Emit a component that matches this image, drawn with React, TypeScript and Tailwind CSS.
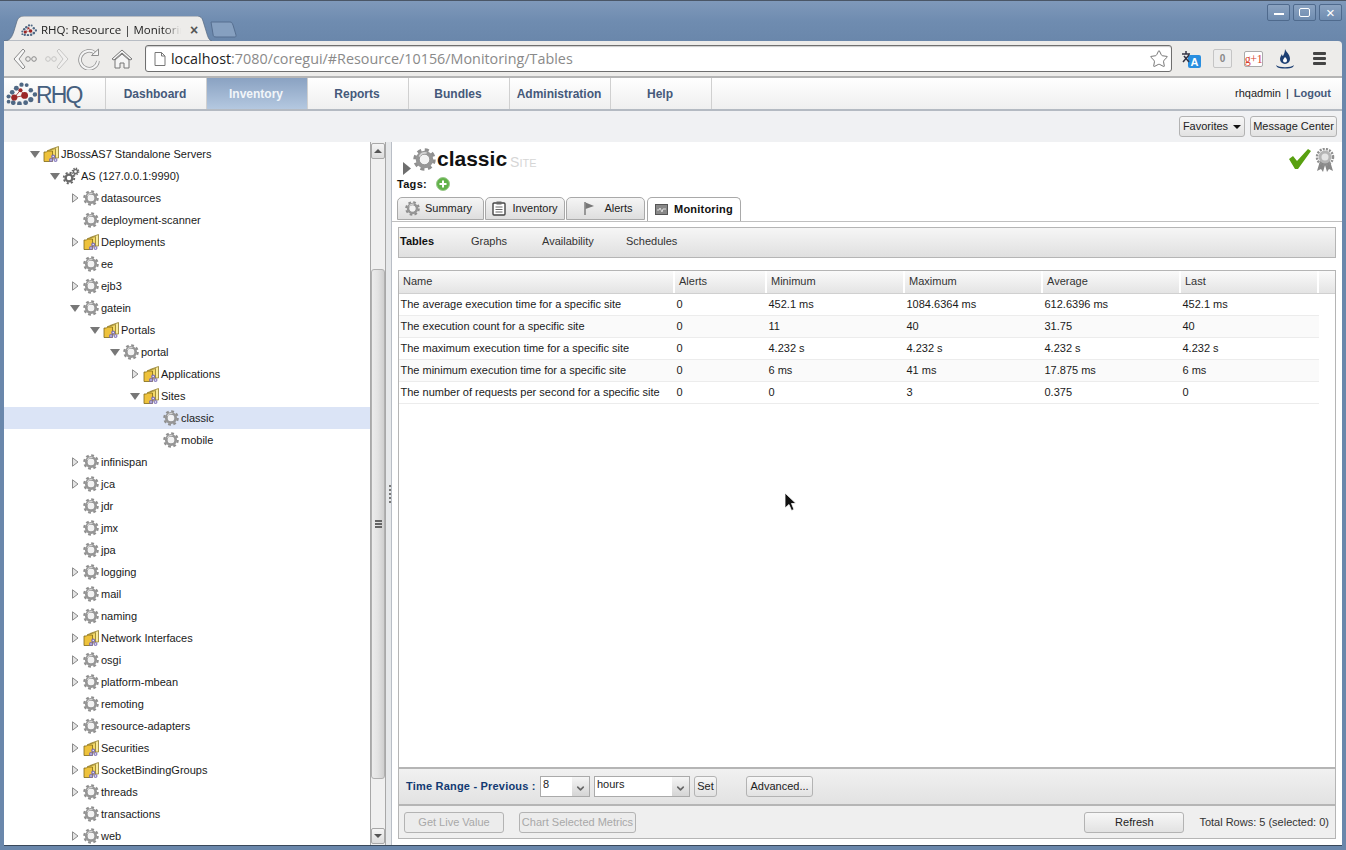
import { ChevronDown, Star } from 'lucide-react';

type Arrow = 'open' | 'closed' | 'none';
type IconKind = 'gear' | 'folder' | 'gears';

interface TreeRow {
  level: number;
  arrow: Arrow;
  icon: IconKind;
  label: string;
  selected?: boolean;
}

const treeRows: TreeRow[] = [
  { level: 0, arrow: 'open', icon: 'folder', label: 'JBossAS7 Standalone Servers' },
  { level: 1, arrow: 'open', icon: 'gears', label: 'AS (127.0.0.1:9990)' },
  { level: 2, arrow: 'closed', icon: 'gear', label: 'datasources' },
  { level: 2, arrow: 'none', icon: 'gear', label: 'deployment-scanner' },
  { level: 2, arrow: 'closed', icon: 'folder', label: 'Deployments' },
  { level: 2, arrow: 'none', icon: 'gear', label: 'ee' },
  { level: 2, arrow: 'closed', icon: 'gear', label: 'ejb3' },
  { level: 2, arrow: 'open', icon: 'gear', label: 'gatein' },
  { level: 3, arrow: 'open', icon: 'folder', label: 'Portals' },
  { level: 4, arrow: 'open', icon: 'gear', label: 'portal' },
  { level: 5, arrow: 'closed', icon: 'folder', label: 'Applications' },
  { level: 5, arrow: 'open', icon: 'folder', label: 'Sites' },
  { level: 6, arrow: 'none', icon: 'gear', label: 'classic', selected: true },
  { level: 6, arrow: 'none', icon: 'gear', label: 'mobile' },
  { level: 2, arrow: 'closed', icon: 'gear', label: 'infinispan' },
  { level: 2, arrow: 'closed', icon: 'gear', label: 'jca' },
  { level: 2, arrow: 'none', icon: 'gear', label: 'jdr' },
  { level: 2, arrow: 'none', icon: 'gear', label: 'jmx' },
  { level: 2, arrow: 'none', icon: 'gear', label: 'jpa' },
  { level: 2, arrow: 'closed', icon: 'gear', label: 'logging' },
  { level: 2, arrow: 'closed', icon: 'gear', label: 'mail' },
  { level: 2, arrow: 'closed', icon: 'gear', label: 'naming' },
  { level: 2, arrow: 'closed', icon: 'folder', label: 'Network Interfaces' },
  { level: 2, arrow: 'closed', icon: 'gear', label: 'osgi' },
  { level: 2, arrow: 'closed', icon: 'gear', label: 'platform-mbean' },
  { level: 2, arrow: 'none', icon: 'gear', label: 'remoting' },
  { level: 2, arrow: 'closed', icon: 'gear', label: 'resource-adapters' },
  { level: 2, arrow: 'closed', icon: 'folder', label: 'Securities' },
  { level: 2, arrow: 'closed', icon: 'folder', label: 'SocketBindingGroups' },
  { level: 2, arrow: 'closed', icon: 'gear', label: 'threads' },
  { level: 2, arrow: 'none', icon: 'gear', label: 'transactions' },
  { level: 2, arrow: 'closed', icon: 'gear', label: 'web' },
];

const navItems = ['Dashboard', 'Inventory', 'Reports', 'Bundles', 'Administration', 'Help'];

const metricRows = [
  ['The average execution time for a specific site', '0', '452.1 ms', '1084.6364 ms', '612.6396 ms', '452.1 ms'],
  ['The execution count for a specific site', '0', '11', '40', '31.75', '40'],
  ['The maximum execution time for a specific site', '0', '4.232 s', '4.232 s', '4.232 s', '4.232 s'],
  ['The minimum execution time for a specific site', '0', '6 ms', '41 ms', '17.875 ms', '6 ms'],
  ['The number of requests per second for a specific site', '0', '0', '3', '0.375', '0'],
];

const columns = ['Name', 'Alerts', 'Minimum', 'Maximum', 'Average', 'Last'];

function Gear({ size = 16 }: { size?: number }) {
  return (
    <svg width={size} height={size} viewBox="0 0 16 16" className="shrink-0">
      <circle cx="8" cy="8" r="6.700" fill="none" stroke="#8f8f8f" strokeWidth="2.200" strokeDasharray="2.800 2.460" />
      <circle cx="8" cy="8" r="4.700" fill="none" stroke="#969696" strokeWidth="2.800" />
      <path d="M4.400 6A4.600 4.600 0 0 1 9.500 3.500" fill="none" stroke="#d4d4d4" strokeWidth="1.200" />
      <circle cx="8" cy="8" r="3.100" fill="#f2f2f2" />
    </svg>
  );
}

function Gears() {
  return (
    <svg width="18" height="18" viewBox="0 0 18 18" className="shrink-0">
      <circle cx="7" cy="11" r="5.300" fill="none" stroke="#666" strokeWidth="1.800" strokeDasharray="2.100 2.060" />
      <circle cx="7" cy="11" r="3.400" fill="none" stroke="#6a6a6a" strokeWidth="2.400" />
      <circle cx="13.500" cy="4.500" r="3.200" fill="none" stroke="#666" strokeWidth="1.400" strokeDasharray="1.300 1.210" />
      <circle cx="13.500" cy="4.500" r="2" fill="none" stroke="#6a6a6a" strokeWidth="1.400" />
    </svg>
  );
}

function Folder() {
  return (
    <svg width="17" height="17" viewBox="0 0 17 17" className="shrink-0">
      <path d="M7 3.500 15.500 .5V12H7Z" fill="#f8ea9a" stroke="#8f7a28" strokeWidth="0.8" />
      <path d="M4.500 4.500 12.500 2.500V13H4.500Z" fill="#f3d968" stroke="#8f7a28" strokeWidth="0.8" />
      <path d="M1 6H3.500L4.500 5H9.500V15.500H1Z" fill="#eec23c" stroke="#7f6818" strokeWidth="0.8" />
      <circle cx="8" cy="14" r="2" fill="#7d70b4" />
      <circle cx="12.500" cy="14" r="2" fill="#8f84c2" />
      <circle cx="10.200" cy="10.500" r="2" fill="#7d70b4" />
      <circle cx="8" cy="14" r="0.700" fill="#fff" />
      <circle cx="12.500" cy="14" r="0.700" fill="#fff" />
      <circle cx="10.200" cy="10.500" r="0.700" fill="#fff" />
    </svg>
  );
}

function TreeArrow({ arrow }: { arrow: Arrow }) {
  if (arrow === 'open') {
    return (
      <svg width="10" height="7" viewBox="0 0 10 7" className="shrink-0">
        <path d="M0 0H10L5 7Z" fill="#777" />
      </svg>
    );
  }
  if (arrow === 'closed') {
    return (
      <svg width="10" height="10" viewBox="0 0 10 10" className="shrink-0">
        <path d="M2.500 .8 8 5 2.500 9.200Z" fill="#e4e4e4" stroke="#8a8a8a" />
      </svg>
    );
  }
  return <span className="w-[10px] shrink-0" />;
}

function TreeItem({ row }: { row: TreeRow }) {
  return (
    <div
      className={`flex h-[22px] shrink-0 items-center text-[11px] text-[#1a1a1a] ${row.selected ? 'bg-[#dbe4f6]' : ''}`}
      style={{ paddingLeft: 26 + row.level * 20 }}
    >
      <span className="flex w-[10px] justify-center">
        <TreeArrow arrow={row.arrow} />
      </span>
      <span className="ml-[3px] flex w-[16px] justify-center">
        {row.icon === 'gear' && <Gear />}
        {row.icon === 'folder' && <Folder />}
        {row.icon === 'gears' && <Gears />}
      </span>
      <span className="ml-[2px] whitespace-nowrap">{row.label}</span>
    </div>
  );
}

function WinButton({ children }: { children: React.ReactNode }) {
  return (
    <div className="flex h-[17px] w-[23px] items-center justify-center rounded-[2px] border border-[#4f6a8d] bg-gradient-to-b from-[#8ba3c1] to-[#6f8cb0]">
      {children}
    </div>
  );
}

function TitleBar() {
  return (
    <div className="relative flex h-[41px] shrink-0 items-start justify-end border-t border-[#4a5666] bg-gradient-to-b from-[#7f99ba] via-[#6f8cb0] to-[#6a87ab] pr-[4px] pt-[3px]">
      <div className="absolute bottom-0 left-[4px] h-[25px] w-[208px]">
        <svg width="208" height="25" viewBox="0 0 208 25" className="absolute inset-0">
          <path d="M0 25C6 25 8 21 10 15L13 5C14 2 16 0 20 0H192C197 0 198 2 199 5L203 18C204 22 206 25 208 25Z" fill="#edecea" stroke="#56697f" strokeWidth="0.7" />
        </svg>
        <div className="relative flex h-full items-center pl-[17px] pt-[3px]">
          <Logo size={16} />
          <span className="ml-[4px] w-[140px] overflow-hidden whitespace-nowrap font-['Open_Sans',sans-serif] text-[11.500px] text-[#222] [mask-image:linear-gradient(to_right,#000_88%,transparent)]">
            RHQ: Resource | Monitoring
          </span>
          <span className="ml-[9px] text-[14px] leading-none font-bold text-[#555]">×</span>
        </div>
      </div>
      <svg width="28" height="17" viewBox="0 0 28 17" className="absolute bottom-[3px] left-[210px]">
        <path d="M1 1H20C22 1 22 2 23 4L26 14C26 15 26 16 25 16H6C4 16 3 15 3 13Z" fill="#86a0c0" stroke="#566f90" />
      </svg>
      <div className="flex gap-[3px]">
        <WinButton><span className="mt-[2px] block h-[2px] w-[10px] bg-white" /></WinButton>
        <WinButton><span className="block h-[9px] w-[11px] rounded-[2px] border-[1.5px] border-white" /></WinButton>
        <WinButton><span className="text-[15px] leading-none text-white">×</span></WinButton>
      </div>
    </div>
  );
}

function Logo({ size = 30 }: { size?: number }) {
  const dots: [number, number, number, string][] = [
    [2.500, 14, 2, '#4f6884'], [6, 10, 2.300, '#4f6884'], [10, 6, 2.400, '#4f6884'], [15, 2.600, 2.100, '#4f6884'],
    [20, 3, 1.900, '#4f6884'], [24, 8, 2.200, '#4f6884'], [28, 12, 2.200, '#4f6884'], [24, 17, 2.500, '#4f6884'],
    [19, 20, 2.300, '#4f6884'], [13, 21, 2.300, '#4f6884'], [7, 20, 2.300, '#4f6884'], [2.500, 19, 1.800, '#4f6884'],
    [8, 15, 3, '#9c2727'], [18, 13, 3.300, '#9c2727'], [14, 8, 2, '#9c2727'],
  ];
  return (
    <svg width={size} height={(size * 23) / 30} viewBox="0 0 30 23" className="shrink-0">
      <path d="M8 15 18 13 14 8Z" fill="none" stroke="#9c2727" strokeWidth="0.8" />
      {dots.map(([cx, cy, r, fill], i) => (
        <circle key={i} cx={cx} cy={cy} r={r} fill={fill} />
      ))}
    </svg>
  );
}

function BrowserToolbar() {
  return (
    <div className="flex h-[37px] shrink-0 items-center rounded-tr-[4px] border-b-2 border-[#b5b5b5] bg-[#edecea]">
      <svg width="26" height="24" viewBox="0 0 26 24" className="ml-[8px]">
        <path d="M11 2 2 12l9 10 2-2-6-8 6-8Z" fill="#f7f7f7" stroke="#8a8a8a" />
        <circle cx="16" cy="12" r="2.300" fill="none" stroke="#8a8a8a" />
        <circle cx="22" cy="12" r="2.300" fill="none" stroke="#8a8a8a" />
      </svg>
      <svg width="26" height="24" viewBox="0 0 26 24" className="ml-[6px] opacity-40">
        <path d="M15 2 24 12l-9 10-2-2 6-8-6-8Z" fill="#f7f7f7" stroke="#8a8a8a" />
        <circle cx="10" cy="12" r="2.300" fill="none" stroke="#8a8a8a" />
        <circle cx="4" cy="12" r="2.300" fill="none" stroke="#8a8a8a" />
      </svg>
      <svg width="22" height="22" viewBox="0 0 22 22" className="ml-[8px]">
        <path d="M17 5A9 9 0 1 0 20 13" fill="none" stroke="#8f8f8f" strokeWidth="3.600" />
        <path d="M17 5A9 9 0 1 0 20 13" fill="none" stroke="#f5f5f5" strokeWidth="2" />
        <path d="M13.500 7.500H20.500V1Z" fill="#f5f5f5" stroke="#8f8f8f" />
      </svg>
      <svg width="22" height="22" viewBox="0 0 22 22" className="ml-[11px]">
        <path d="M1 11 11 2l10 9-2 1-8-7-8 7Z" fill="#f5f5f5" stroke="#777" />
        <path d="M4 12v8h5v-5h4v5h5v-8l-7-6Z" fill="#f5f5f5" stroke="#777" />
      </svg>
      <div className="ml-[12px] flex h-[27px] w-[1027px] items-center rounded-[3px] border border-[#6f6f6f] bg-white pl-[8px] pr-[2px] shadow-[inset_0_1px_1px_#ccc]">
        <svg width="12" height="14" viewBox="0 0 12 14" className="shrink-0">
          <path d="M1 .5H7.500L11 4V13.500H1Z M7.500 .5V4H11" fill="#fff" stroke="#777" />
        </svg>
        <span className="ml-[5px] font-['Open_Sans',sans-serif] text-[14.350px] whitespace-nowrap text-[#8a8a8a]">
          <span className="text-[#222]">localhost</span>:7080/coregui/#Resource/10156/Monitoring/Tables
        </span>
        <Star className="ml-auto h-[20px] w-[20px] text-[#777]" strokeWidth={1.200} />
      </div>
      <svg width="20" height="20" viewBox="0 0 20 20" className="ml-[9px]">
        <rect x="7" y="6" width="13" height="13" rx="2" fill="#2a8fe0" />
        <text x="9.500" y="17" fontSize="11" fontWeight="bold" fill="#fff" fontFamily="Liberation Sans">A</text>
        <path d="M1 5h8M5 2v3M2 13 8 6M3 7l5 6" stroke="#334" strokeWidth="1.500" fill="none" />
      </svg>
      <div className="ml-[12px] flex h-[19px] w-[19px] items-center justify-center rounded-[2px] border border-[#c5c5c5] bg-[#ededed] text-[10px] font-bold text-[#888]">0</div>
      <div className="ml-[12px] flex h-[16px] w-[19px] items-center justify-center rounded-[2px] border border-[#aaa] bg-white font-['Liberation_Serif',serif] text-[12px] leading-none tracking-[-0.5px] text-[#d8432f]">g+1</div>
      <svg width="20" height="22" viewBox="0 0 20 22" className="ml-[12px]">
        <path d="M10 1c1 3 5 5 5 10a5 5 0 0 1-10 0c0-2 1-3 2-5 0 2 1 2 1 2 1-2 2-4 2-7Z" fill="#1d3f73" />
        <path d="M10 9c1 1 2 2 2 3.500a2 2 0 0 1-4 0c0-1 1-2 2-3.500Z" fill="#fff" />
        <path d="M1 17c3 3 15 3 18 0l-1 2c-3 2-13 2-16 0Z" fill="#1d3f73" />
      </svg>
      <div className="ml-[18px] flex flex-col gap-[2px]">
        <span className="block h-[3px] w-[13px] rounded-[1px] bg-[#444]" />
        <span className="block h-[3px] w-[13px] rounded-[1px] bg-[#444]" />
        <span className="block h-[3px] w-[13px] rounded-[1px] bg-[#444]" />
      </div>
    </div>
  );
}

function AppNav() {
  return (
    <div className="flex h-[33px] shrink-0 border-b-2 border-[#b4bac2] bg-gradient-to-b from-white to-[#efefef]">
      <div className="flex w-[102px] items-center border-r border-[#d0d0d0] pl-[2px]">
        <Logo size={31} />
        <span className="ml-[-1px] mt-[3px] font-['Liberation_Sans',sans-serif] text-[23px] leading-none tracking-[-1.800px] text-[#46607f]">RHQ</span>
      </div>
      {navItems.map((item) => (
        <div
          key={item}
          className={`flex w-[101px] items-center justify-center border-r border-[#d0d0d0] pr-[2px] text-[12px] font-bold ${
            item === 'Inventory' ? 'bg-gradient-to-b from-[#8aa2c2] to-[#b4c8e0] text-[#f2f5f9]' : 'text-[#45597a]'
          }`}
        >
          {item}
        </div>
      ))}
      <div className="ml-auto flex items-center pr-[11px] text-[11px] text-[#222]">
        rhqadmin<span className="mx-[5px]">|</span><span className="font-bold text-[#45597a]">Logout</span>
      </div>
    </div>
  );
}

function Btn({ children, className = '', disabled = false }: { children: React.ReactNode; className?: string; disabled?: boolean }) {
  return (
    <div
      className={`flex h-[21px] items-center justify-center whitespace-nowrap rounded-[3px] border border-[#b3b3b3] text-[11px] ${
        disabled ? 'bg-[#ececec] text-[#a8a8a8]' : 'bg-gradient-to-b from-[#f7f7f7] to-[#e2e2e2] text-[#222]'
      } ${className}`}
    >
      {children}
    </div>
  );
}

function Scrollbar() {
  return (
    <div className="flex w-[16px] shrink-0 flex-col border-x border-[#a8a8a8] bg-[#f0f0f0] pt-[1px]">
      <div className="flex h-[16px] items-center justify-center rounded-[2px] border border-[#a8a8a8] bg-gradient-to-b from-[#f5f5f5] to-[#dcdcdc]">
        <span className="h-0 w-0 border-x-[4px] border-b-[4px] border-x-transparent border-b-[#555]" />
      </div>
      <div className="mt-[110px] flex h-[510px] items-center justify-center rounded-[3px] border border-[#b0b0b0] bg-gradient-to-r from-[#ececec] via-[#e2e2e2] to-[#cfcfcf]">
        <span className="flex flex-col gap-[1px]">
          <i className="block h-[2px] w-[7px] bg-[#666]" />
          <i className="block h-[2px] w-[7px] bg-[#666]" />
          <i className="block h-[2px] w-[7px] bg-[#666]" />
        </span>
      </div>
      <div className="mt-auto mb-[1px] flex h-[16px] items-center justify-center rounded-[2px] border border-[#a8a8a8] bg-gradient-to-b from-[#f5f5f5] to-[#dcdcdc]">
        <span className="h-0 w-0 border-x-[4px] border-t-[4px] border-x-transparent border-t-[#555]" />
      </div>
    </div>
  );
}

function Splitter() {
  return (
    <div className="flex w-[6px] shrink-0 flex-col items-center justify-center gap-[2px] border-r border-[#b9bec6] bg-[#e6e8ea] pl-[2px]">
      {[0, 1, 2, 3, 4].map((i) => (
        <i key={i} className="block h-[2px] w-[2px] bg-[#777]" />
      ))}
    </div>
  );
}

function TabButton({ label, active, icon, className = 'justify-center gap-[6px]' }: { label: string; active?: boolean; icon: React.ReactNode; className?: string }) {
  return (
    <div
      className={`flex items-center rounded-t-[5px] border border-[#a9a9a9] pb-[1px] text-[11px] ${
        active ? 'relative z-10 h-[24px] border-b-0 bg-white font-bold tracking-[0.2px] text-[#111]' : 'h-[23px] bg-gradient-to-b from-[#f5f5f5] to-[#dedede] text-[#222]'
      } ${className}`}
    >
      {icon}
      <span>{label}</span>
    </div>
  );
}

function MonitorTabs() {
  return (
    <div className="flex items-start gap-[1px] border-b border-[#bfbfbf] pl-[5px]">
      <div className="w-[87px]"><TabButton label="Summary" className="gap-[5px] pl-[7px]" icon={<Gear size={15} />} /></div>
      <div className="w-[80px]">
        <TabButton
          label="Inventory"
          icon={
            <svg width="14" height="15" viewBox="0 0 14 15">
              <rect x="1" y="2" width="12" height="12" rx="1" fill="#fff" stroke="#444" strokeWidth="1.400" />
              <rect x="4.500" y="0.500" width="5" height="3" fill="#666" />
              <path d="M3.500 6h7M3.500 8.500h7M3.500 11h7" stroke="#666" />
            </svg>
          }
        />
      </div>
      <div className="w-[79px]">
        <TabButton
          label="Alerts"
          icon={
            <svg width="14" height="14" viewBox="0 0 14 14" className="mr-[2px] ml-[4px]">
              <path d="M3 1V14" stroke="#777" strokeWidth="1.400" />
              <path d="M3.500 1.500 12 5 3.500 8Z" fill="#777" />
            </svg>
          }
        />
      </div>
      <div className="ml-[1px] w-[94px]">
        <TabButton
          active
          label="Monitoring"
          icon={
            <svg width="13" height="11" viewBox="0 0 13 11">
              <rect x=".5" y=".5" width="12" height="10" fill="#888" stroke="#555" />
              <path d="M2 6h2l1-2 2 4 1-3h3" stroke="#ddd" fill="none" />
            </svg>
          }
        />
      </div>
    </div>
  );
}

function MetricsTable() {
  return (
    <div className="flex min-h-0 flex-1 flex-col bg-white">
      <div className="grid h-[23px] shrink-0 grid-cols-[276px_92px_138px_138px_138px_138px_1fr] border-b border-[#d0d0d0] bg-gradient-to-b from-[#fafafa] to-[#e4e4e4] text-[11px] text-[#333]">
        {columns.map((c) => (
          <div key={c} className="flex items-center border-r-2 border-white pb-[2px] pl-[4px]">{c}</div>
        ))}
        <div />
      </div>
      {metricRows.map((row, i) => (
        <div
          key={row[0]}
          className={`grid h-[22px] w-[920px] shrink-0 grid-cols-[276px_92px_138px_138px_138px_138px] items-center border-b border-[#ececec] text-[11px] text-[#1a1a1a] ${
            i % 2 === 1 ? 'bg-[#fafafa]' : 'bg-white'
          }`}
        >
          {row.map((cell, j) => (
            <div key={j} className="pl-[1.500px] whitespace-nowrap">{cell}</div>
          ))}
        </div>
      ))}
    </div>
  );
}

function Select({ value, className }: { value: string; className: string }) {
  return (
    <div className={`flex h-[21px] border border-[#aaa] bg-white text-[11px] text-[#222] ${className}`}>
      <span className="flex-1 pl-[2px] leading-[15px]">{value}</span>
      <span className="flex w-[17px] items-end justify-center bg-gradient-to-b from-[#f5f5f5] to-[#d5d5d5] pb-[2px]">
        <ChevronDown className="h-[11px] w-[11px] text-[#666]" strokeWidth={3.500} />
      </span>
    </div>
  );
}

export default function App() {
  return (
    <div className="flex h-[850px] w-[1346px] flex-col overflow-hidden bg-[#6a87ab] font-['Liberation_Sans',Arial,sans-serif]">
      <TitleBar />
      <div className="mx-[4px] mb-[4px] flex min-h-0 flex-1 flex-col border-b border-[#39485a]">
        <BrowserToolbar />
        <AppNav />
        <div className="flex h-[31px] shrink-0 items-center justify-end gap-[5px] bg-[#f0f1f3] pr-[5px]">
          <Btn className="w-[66px] gap-[5px]">
            Favorites
            <span className="h-0 w-0 border-x-[4px] border-t-[4px] border-x-transparent border-t-[#111]" />
          </Btn>
          <Btn className="w-[87px]">Message Center</Btn>
        </div>
        <div className="flex min-h-0 flex-1 bg-white">
          {/* Inventory tree */}
          <div className="flex w-[382px] shrink-0">
            <div className="flex min-w-0 flex-1 flex-col overflow-hidden pt-px">
              {treeRows.map((row) => (
                <TreeItem key={row.label} row={row} />
              ))}
            </div>
            <Scrollbar />
          </div>
          <Splitter />
          {/* Resource detail */}
          <div className="flex min-w-0 flex-1 flex-col">
            <div className="flex h-[55px] shrink-0 flex-col pl-[5px] pr-[7px]">
              <div className="flex h-[34px] items-start pt-[6px]">
                <svg width="10" height="13" viewBox="0 0 10 13" className="mt-[14px] ml-[5px]">
                  <path d="M1 0 9 6.500 1 13Z" fill="#6e6e6e" />
                </svg>
                <span className="ml-[1px]"><Gear size={23} /></span>
                <span className="ml-px text-[21px] leading-[22px] font-bold text-[#111]">classic</span>
                <span className="mt-[6px] ml-[3px] text-[14px] leading-[16px] text-[#d6d6d6]">S<span className="text-[11px]">ITE</span></span>
                <svg width="24" height="22" viewBox="0 0 24 22" className="ml-auto">
                  <path d="M1 11 5 8l4 5L20 1l3 2L10 21H7Z" fill="#58a010" />
                </svg>
                <svg width="20" height="24" viewBox="0 0 20 24" className="ml-[3px]">
                  <path d="M5 13 2 23l4-2 2 3 2-7 2 7 2-3 4 2-3-10Z" fill="#888" />
                  <circle cx="10" cy="9" r="8" fill="none" stroke="#8f8f8f" strokeWidth="2.500" strokeDasharray="2 1.200" />
                  <circle cx="10" cy="9" r="6.500" fill="#b5b5b5" />
                  <circle cx="10" cy="9" r="3.500" fill="#e5e5e5" />
                </svg>
              </div>
              <div className="flex items-center text-[11px] font-bold tracking-[0.3px] text-[#111]">
                Tags:
                <svg width="14" height="14" viewBox="0 0 14 14" className="ml-[9px]">
                  <circle cx="7" cy="7" r="6.500" fill="#62b24a" stroke="#9bc98d" />
                  <path d="M7 3.500v7M3.500 7h7" stroke="#fff" strokeWidth="2" />
                </svg>
              </div>
            </div>
            <MonitorTabs />
            <div className="flex min-h-0 flex-1 flex-col px-[6px] pb-[6px] pt-[5px]">
              <div className="flex h-[31px] shrink-0 items-center border border-[#b5b5b5] bg-gradient-to-b from-[#f6f6f6] to-[#e0e0e0] pb-[2px] pl-[1px] text-[11px] text-[#333]">
                <span className="w-[71px] font-bold text-[#111]">Tables</span>
                <span className="w-[71px]">Graphs</span>
                <span className="w-[84px]">Availability</span>
                <span>Schedules</span>
              </div>
              <div className="mt-[12px] flex min-h-0 flex-1 flex-col border border-[#b5b5b5]">
                <MetricsTable />
                <div className="flex h-[39px] shrink-0 items-center border-y-2 border-[#b5b5b5] bg-gradient-to-b from-[#f1f1f1] to-[#e2e2e2] pl-[7px]">
                  <span className="w-[134px] text-[11px] font-bold tracking-[0.2px] whitespace-nowrap text-[#123a72]">Time Range - Previous :</span>
                  <Select value="8" className="w-[50px]" />
                  <Select value="hours" className="ml-[4px] w-[96px]" />
                  <Btn className="ml-[4px] w-[23px]">Set</Btn>
                  <Btn className="ml-[29px] w-[67px]">Advanced...</Btn>
                </div>
                <div className="flex h-[32px] shrink-0 items-center bg-[#efefef] pl-[5px] text-[11px] text-[#333]">
                  <Btn disabled className="w-[100px]">Get Live Value</Btn>
                  <Btn disabled className="ml-[15px] w-[117px]">Chart Selected Metrics</Btn>
                  <Btn className="ml-auto w-[100px]">Refresh</Btn>
                  <span className="ml-[15px] mr-[6px] whitespace-nowrap">Total Rows: 5 (selected: 0)</span>
                </div>
              </div>
            </div>
          </div>
        </div>
      </div>
      {/* mouse pointer captured in the screenshot */}
      <svg width="14" height="20" viewBox="0 0 14 20" className="absolute left-[784px] top-[492px]">
        <path d="M1 1V16L5 12.500 7.500 18.500 10 17.500 7.500 11.500H12Z" fill="#111" stroke="#fff" strokeWidth="0.8" />
      </svg>
    </div>
  );
}
